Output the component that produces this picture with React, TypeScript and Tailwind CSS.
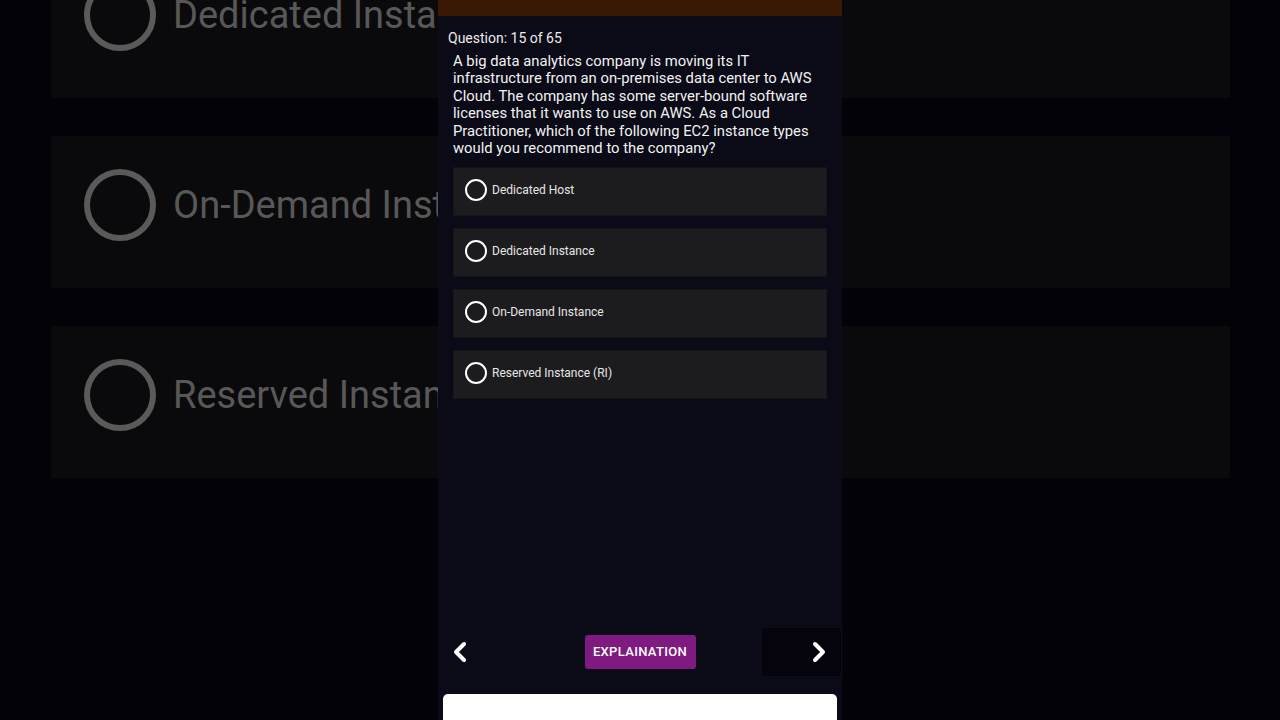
import React from 'react';

const options = ['Dedicated Host', 'Dedicated Instance', 'On-Demand Instance', 'Reserved Instance (RI)'];
const bgOptions = ['Dedicated Instance', 'On-Demand Instance', 'Reserved Instance (RI)'];

const Chevron: React.FC<{ dir: 'left' | 'right' }> = ({ dir }) => (
  <svg width="16" height="22" viewBox="0 0 16 22" fill="none">
    <polyline
      points={dir === 'left' ? '12,3 4,11 12,19' : '4,3 12,11 4,19'}
      stroke="white"
      strokeWidth="4"
      strokeLinecap="round"
      strokeLinejoin="round"
    />
  </svg>
);

const App: React.FC = () => {
  return (
    <div className="relative w-[1280px] h-[720px] overflow-hidden bg-[#030208] font-['Roboto',sans-serif]">
      {/* Blurred, enlarged backdrop of the same screen */}
      <div className="absolute inset-0 flex flex-col gap-[38px] px-[51px] -mt-[54px] w-[1281px]">
        {bgOptions.map((label) => (
          <div key={label} className="h-[152px] bg-[#0a0a0c] flex items-start pt-[33px] pl-[33px] gap-[17px] overflow-hidden">
            <div className="w-[72px] h-[72px] rounded-full border-[6px] border-[#5a5a5a] shrink-0"></div>
            {/* clipped where the phone column covers it */}
            <div className="w-[265px] overflow-hidden shrink-0">
              <span className="block text-[38px] leading-[72px] text-[#585858] whitespace-nowrap">{label}</span>
            </div>
          </div>
        ))}
      </div>

      {/* Phone column */}
      <div className="relative z-10 ml-[438px] w-[404px] h-full bg-[#0b0a17] flex flex-col">
        <div className="h-[16px] bg-[#3a1904]"></div>

        <div className="pl-[10px] mt-[12px] text-[14px] leading-[20px] text-[#ececec]">Question: 15 of 65</div>
        <p className="px-[15px] mt-[5px] text-[14.8px] leading-[17.4px] text-[#f2f2f2] w-[389px]">
          A big data analytics company is moving its IT infrastructure from an on-premises data center to AWS Cloud. The company has some server-bound software licenses that it wants to use on AWS. As a Cloud Practitioner, which of the following EC2 instance types would you recommend to the company?
        </p>

        <div className="flex flex-col gap-[12px] mt-[10px] mx-[15px]">
          {options.map((label) => (
            <div key={label} className="h-[49px] bg-[#1c1c1e] border border-[#141416] flex items-center pl-[11px] gap-[5px] pb-[3px]">
              <div className="w-[22px] h-[22px] rounded-full border-2 border-white shrink-0"></div>
              <span className="text-[12px] text-[#e6e6e6]">{label}</span>
            </div>
          ))}
        </div>

        <div className="flex-1"></div>

        {/* Navigation */}
        <div className="h-[50px] flex items-center">
          <div className="w-[81px] pl-[14px] flex items-center">
            <Chevron dir="left" />
          </div>
          <div className="flex-1 flex justify-center">
            <button className="h-[34px] px-[8px] w-[111px] rounded-[3px] bg-[#7e1a80] text-white text-[13px] font-medium tracking-wide">
              EXPLAINATION
            </button>
          </div>
          <div className="w-[81px] h-[50px] bg-[#05040c] border border-[#0f0e18] flex items-center justify-end pr-[14px]">
            <Chevron dir="right" />
          </div>
        </div>

        <div className="mt-[17px] mx-[5px] h-[26px] bg-white rounded-t-[5px] shrink-0"></div>
      </div>
    </div>
  );
};

export default App;
